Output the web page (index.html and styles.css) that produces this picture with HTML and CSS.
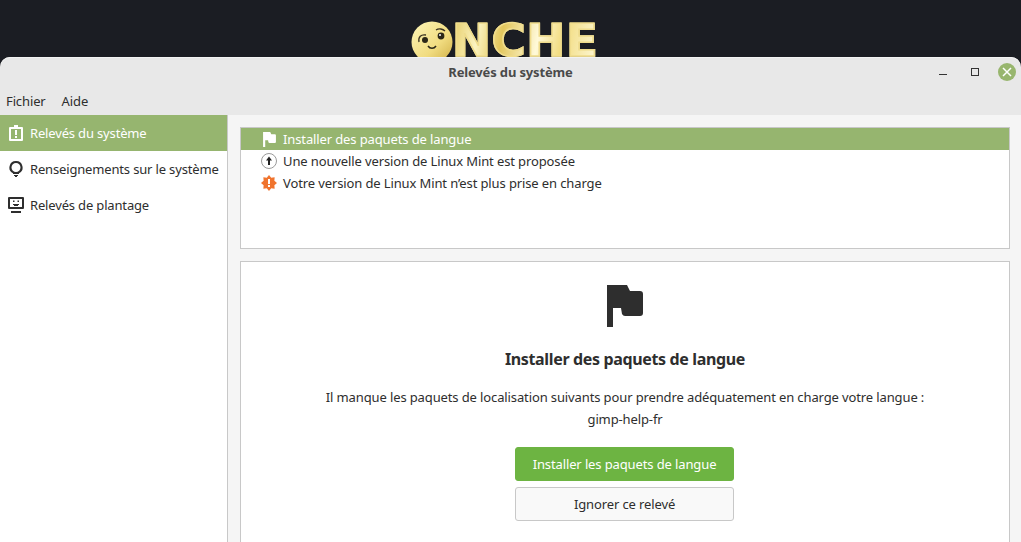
FILE: index.html
```html
<!DOCTYPE html>
<html lang="fr">
<head>
    <meta charset="UTF-8">
    <meta name="viewport" content="width=device-width, initial-scale=1.0">
    <title>Relevés du système</title>
    <link rel="stylesheet" href="styles.css">
</head>
<body>
    <div class="backdrop">
        <svg class="logo-face" viewBox="0 0 42 42" width="42" height="42">
            <defs>
                <linearGradient id="face" x1="0" y1="0" x2="1" y2="1">
                    <stop offset="0" stop-color="#fdf5b8"/>
                    <stop offset="0.6" stop-color="#f1dc80"/>
                    <stop offset="1" stop-color="#cfae45"/>
                </linearGradient>
            </defs>
            <circle cx="21" cy="21" r="20.5" fill="url(#face)"/>
            <path d="M8 21c-1-5 2-8 7-7" fill="none" stroke="#3a3320" stroke-width="1.3"/>
            <circle cx="14" cy="19" r="3" fill="#2b2718"/>
            <circle cx="30" cy="15" r="3.400" fill="#2b2718"/>
            <circle cx="29" cy="14" r="1" fill="#fff"/>
            <path d="M25 9c3-2 7-1 9 1" fill="none" stroke="#3a3320" stroke-width="1.300"/>
            <path d="M17 25c2 3 6 3 8 0" fill="none" stroke="#2b2718" stroke-width="1.500"/>
        </svg>
        <span class="logo-text">NCHE</span>
    </div>

    <div class="window">
        <header class="titlebar">
            <div class="title">Relevés du système</div>
            <div class="controls">
                <span class="ctl-min"></span>
                <span class="ctl-max"></span>
                <span class="ctl-close">
                    <svg viewBox="0 0 18 18" width="18" height="18">
                        <path d="M5 5l8 8M13 5l-8 8" stroke="#fff" stroke-width="1.500" fill="none"/>
                    </svg>
                </span>
            </div>
        </header>
        <nav class="menubar">
            <span>Fichier</span>
            <span>Aide</span>
        </nav>
        <div class="main">
            <aside class="sidebar">
                <div class="side-item active">
                    <svg viewBox="0 0 16 16" width="16" height="16">
                        <path fill="#fff" fill-rule="evenodd" d="M6 0h4v2h4a1 1 0 0 1 1 1v12a1 1 0 0 1-1 1H2a1 1 0 0 1-1-1V3a1 1 0 0 1 1-1h4zM3 4v10h10V4zM7 5h2v5H7zM7 11h2v2H7z"/>
                    </svg>
                    <span>Relevés du système</span>
                </div>
                <div class="side-item">
                    <svg viewBox="0 0 16 16" width="16" height="16">
                        <path fill="#2e2e2e" fill-rule="evenodd" d="M8 0a6.500 6.500 0 0 1 3 12.300V13H5v-.7A6.500 6.500 0 0 1 8 0zm0 2a4.500 4.500 0 1 0 0 9 4.500 4.500 0 0 0 0-9zM6 14h4v1H9v1H7v-1H6z"/>
                    </svg>
                    <span>Renseignements sur le système</span>
                </div>
                <div class="side-item">
                    <svg viewBox="0 0 16 16" width="16" height="16">
                        <path fill="#2e2e2e" fill-rule="evenodd" d="M1 0h14a1 1 0 0 1 1 1v10a1 1 0 0 1-1 1H1a1 1 0 0 1-1-1V1a1 1 0 0 1 1-1zm1 2v8h12V2zM5 3.500h1.500V5H5zM9.500 3.500H11V5H9.500zM5 8V7h6v1h-1v1H6V8zM3 14h10v2H3z"/>
                    </svg>
                    <span>Relevés de plantage</span>
                </div>
            </aside>
            <section class="content">
                <div class="report-list">
                    <div class="report selected">
                        <svg viewBox="0 0 36 42" width="13" height="15">
                            <path fill="#fff" d="M0 0h20l3 6h10q3 0 3 3v19q0 3-3 3H18q-2 0-3-2l-1-6H6v19H0z"/>
                        </svg>
                        <span>Installer des paquets de langue</span>
                    </div>
                    <div class="report">
                        <svg viewBox="0 0 16 16" width="16" height="16">
                            <circle cx="8" cy="8" r="7.500" fill="#fff" stroke="#9a9a9a"/>
                            <path fill="#222" d="M8 3.500L11 7.500H9V12H7V7.500H5z"/>
                        </svg>
                        <span>Une nouvelle version de Linux Mint est proposée</span>
                    </div>
                    <div class="report">
                        <svg viewBox="0 0 16 16" width="16" height="16">
                            <path fill="#f0742e" fill-rule="evenodd" d="M8 0L10.220 2.640 13.660 2.340 13.360 5.780 16 8 13.360 10.220 13.660 13.660 10.220 13.360 8 16 5.780 13.360 2.340 13.660 2.640 10.220 0 8 2.640 5.780 2.340 2.340 5.780 2.640zM7 4v5h2V4zM7 10v2h2v-2z"/>
                        </svg>
                        <span>Votre version de Linux Mint n’est plus prise en charge</span>
                    </div>
                </div>
                <div class="detail">
                    <svg class="detail-flag" viewBox="0 0 36 42" width="36" height="42">
                        <path fill="#2e2e2e" d="M0 0h20l3 6h10q3 0 3 3v19q0 3-3 3H18q-2 0-3-2l-1-6H6v19H0z"/>
                    </svg>
                    <h2>Installer des paquets de langue</h2>
                    <p>Il manque les paquets de localisation suivants pour prendre adéquatement en charge votre langue :</p>
                    <p class="pkg">gimp-help-fr</p>
                    <button class="btn btn-green">Installer les paquets de langue</button>
                    <button class="btn">Ignorer ce relevé</button>
                </div>
            </section>
        </div>
    </div>
</body>
</html>
```

FILE: styles.css
```css
html, body {
    margin: 0;
    padding: 0;
    height: 542px;
    overflow: hidden;
}
body {
    font-family: "Noto Sans", "Open Sans", sans-serif;
    font-size: 13px;
    letter-spacing: -0.12px;
    color: #2e2e2e;
    background-color: #1b1d23; /* desktop behind the window */
    display: flex;
    flex-direction: column;
}
.backdrop {
    height: 57px;
    flex: none;
    display: flex;
    align-items: flex-start;
    padding: 21px 0 0 411px;
    box-sizing: border-box;
}
.logo-face {
    flex: none;
}
.logo-text {
    margin: 2px 0 0 -1px;
    font-family: "DejaVu Sans", sans-serif;
    font-weight: bold;
    font-size: 44px;
    line-height: 36px;
    letter-spacing: 0.5px;
    transform: scaleX(1.06);
    transform-origin: left top;
    -webkit-text-stroke: 1.5px #efdc8c;
    background: linear-gradient(100deg, #e6cd68 0%, #fbf3c0 18%, #e2c65c 34%, #fff9d8 58%, #f2dc80 74%, #fdf8d8 100%);
    -webkit-background-clip: text;
    background-clip: text;
    color: transparent;
}
.window {
    flex: 1;
    min-height: 0;
    position: relative; /* sits over the bottom of the logo */
    z-index: 1;
    display: flex;
    flex-direction: column;
    background-color: #e8e8e8;
    border-radius: 10px 10px 0 0;
    box-shadow: inset 0 1px 0 #f2f2f2;
}
.titlebar {
    height: 30px;
    flex: none;
    display: flex;
    align-items: center;
    justify-content: center;
    position: relative;
}
.title {
    font-weight: bold;
    color: #4a4a4a;
    letter-spacing: -0.15px;
}
.controls {
    position: absolute;
    right: 5px;
    top: 6px;
    display: flex;
    align-items: center;
}
.ctl-min {
    width: 8px;
    height: 1px;
    margin-top: 5px;
    margin-right: 24px;
    background-color: #333;
}
.ctl-max {
    width: 6px;
    height: 6px;
    margin-right: 19px;
    border: 1px solid #333;
}
.ctl-close {
    width: 18px;
    height: 18px;
    border-radius: 50%;
    background-color: #98b66e;
    display: flex;
}
.menubar {
    height: 28px;
    flex: none;
    display: flex;
    align-items: center;
    gap: 16px;
    padding: 0 6px;
    box-sizing: border-box;
}
.main {
    flex: 1;
    min-height: 0;
    display: flex;
}
.sidebar {
    width: 227px;
    flex: none;
    background-color: #fff;
    border-right: 1px solid #c8c8c8;
    letter-spacing: -0.16px;
}
.side-item {
    height: 36px;
    display: flex;
    align-items: center;
    gap: 6px;
    padding-left: 8px;
}
.side-item.active {
    background-color: #96b56f;
    color: #fff;
}
.content {
    flex: 1;
    min-width: 0;
    padding: 12px 11px 0 12px;
    background-color: #f5f5f5;
    display: flex;
    flex-direction: column;
    gap: 12px;
}
.report-list {
    height: 120px;
    flex: none;
    background-color: #fff;
    border: 1px solid #c8c8c8;
}
.report {
    height: 22px;
    display: flex;
    align-items: center;
    gap: 6px;
    padding-left: 20px;
}
.report.selected {
    background-color: #96b56f;
    color: #fff;
}
.report.selected svg {
    margin-left: 2px;
    margin-right: 1px;
}
.detail {
    flex: 1;
    background-color: #fff;
    border: 1px solid #c8c8c8;
    border-bottom: 0;
    display: flex;
    flex-direction: column;
    align-items: center;
    padding-top: 23px;
}
.detail h2 {
    margin: 21px 0 0;
    font-size: 16px;
    line-height: 22px;
    letter-spacing: -0.35px;
}
.detail p {
    margin: 16px 0 0;
    line-height: 22px;
}
.detail p.pkg {
    margin-top: 0;
}
.btn {
    width: 219px;
    height: 34px;
    margin: 6px 1px 0 0;
    flex: none;
    font: inherit;
    letter-spacing: inherit;
    color: inherit;
    background-color: #f9f9f9;
    border: 1px solid #c8c8c8;
    border-radius: 3px;
}
.btn-green {
    margin-top: 17px;
    background-color: #6db442;
    border-color: #6db442;
    color: #fff;
}
```
